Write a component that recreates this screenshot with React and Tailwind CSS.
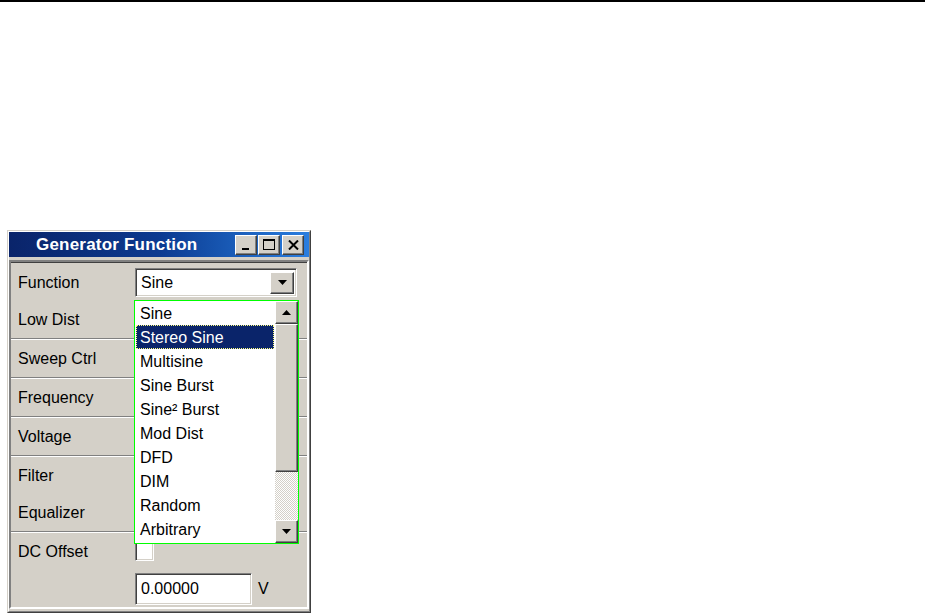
const raised =
  "border border-t-white border-l-white border-r-[#404040] border-b-[#404040] shadow-[inset_-1px_-1px_#808080]";
const sunken =
  "border border-t-[#808080] border-l-[#808080] border-r-white border-b-white shadow-[inset_1px_1px_#404040,inset_-1px_-1px_#d4d0c8]";

const options = [
  "Sine",
  "Stereo Sine",
  "Multisine",
  "Sine Burst",
  "Sine² Burst",
  "Mod Dist",
  "DFD",
  "DIM",
  "Random",
  "Arbitrary",
];

function Arrow({ up }) {
  return (
    <svg width="9" height="5" viewBox="0 0 9 5">
      <path d={up ? "M4.5 0L9 5H0z" : "M0 0h9L4.5 5z"} fill="#000" />
    </svg>
  );
}

function TitleButton({ children }) {
  return (
    <div className={`flex h-[20px] w-[22px] items-center justify-center bg-[#d4d0c8] ${raised}`}>
      {children}
    </div>
  );
}

function Row({ label, children }) {
  return (
    <div className="flex h-[37px] items-center">
      <div className="w-[124px] pl-[7px] pt-px">{label}</div>
      {children}
    </div>
  );
}

function Separator() {
  return (
    <div>
      <div className="h-px bg-[#808080]" />
      <div className="h-px bg-white" />
    </div>
  );
}

export default function App() {
  return (
    <div
      className="h-[616px] w-[925px] overflow-hidden bg-white text-[16px] text-black"
      style={{ fontFamily: '"Liberation Sans", Arial, sans-serif' }}
    >
      <div className="h-[2px] bg-black" />

      <div className="ml-[7px] mt-[228px] w-[304px] border border-t-[#d4d0c8] border-l-[#d4d0c8] border-r-[#404040] border-b-[#404040]">
        <div className="border border-t-white border-l-white border-r-[#808080] border-b-[#808080] bg-[#d4d0c8] pb-[2px]">
          {/* title bar */}
          <div className="flex h-[25px] items-center bg-gradient-to-r from-[#0a246a] via-[#0c3a90] to-[#2a7ee0] pl-[27px] pr-[5px]">
            <div className="flex-1 text-[17px] font-bold tracking-[0.2px] text-white">Generator Function</div>
            <div className="flex items-center">
              <TitleButton>
                <div className="ml-[-2px] mt-[9px] h-[2px] w-[7px] bg-black" />
              </TitleButton>
              <div className="ml-px">
                <TitleButton>
                  <div className="h-[11px] w-[12px] border border-t-2 border-black" />
                </TitleButton>
              </div>
              <div className="ml-[2px]">
                <TitleButton>
                  <svg width="11" height="10" viewBox="0 0 11 10">
                    <path d="M1 0.5L10 9.5M10 0.5L1 9.5" stroke="#000" strokeWidth="2" />
                  </svg>
                </TitleButton>
              </div>
            </div>
          </div>

          {/* panel */}
          <div className="mt-[3px] border-2 border-t-[#808080] border-l-[#808080] border-r-white border-b-white">
            <div className="relative border-t border-t-[#404040]">
              <div className="pt-px">
                <Row label="Function">
                  <div className={`flex h-[29px] w-[162px] items-center bg-white ${sunken}`}>
                    <div className="flex-1 pl-[5px] pt-px">Sine</div>
                    <div className={`mr-[2px] flex h-[22px] w-[24px] items-center justify-center bg-[#d4d0c8] ${raised}`}>
                      <Arrow />
                    </div>
                  </div>
                </Row>
                <Row label="Low Dist" />
              </div>
              <Separator />
              <Row label="Sweep Ctrl" />
              <Separator />
              <Row label="Frequency" />
              <Separator />
              <Row label="Voltage" />
              <Separator />
              <Row label="Filter" />
              <Row label="Equalizer" />
              <Separator />
              <Row label="DC Offset">
                <div className={`h-[19px] w-[19px] bg-white ${sunken}`} />
              </Row>
              <Row label="">
                <div className={`flex h-[32px] w-[117px] items-center bg-white pl-[5px] pt-px ${sunken}`}>0.00000</div>
                <div className="ml-[6px] pt-px">V</div>
              </Row>

              {/* open dropdown list */}
              <div className="absolute left-[123px] top-[37px] z-10 flex h-[244px] w-[165px] border border-[#00ff00] bg-white">
                <div className="flex-1">
                  {options.map((o, i) =>
                    i === 1 ? (
                      <div
                        key={o}
                        className="mx-px flex h-[24px] items-center bg-[#0a246a] pl-[4px] pt-px text-white outline-1 outline-dotted -outline-offset-1 outline-[#ffff80]"
                      >
                        {o}
                      </div>
                    ) : (
                      <div key={o} className="flex h-[24px] items-center pl-[5px] pt-px">
                        {o}
                      </div>
                    )
                  )}
                </div>
                <div className="flex w-[23px] flex-col">
                  <div className={`flex h-[23px] items-center justify-center bg-[#d4d0c8] ${raised}`}>
                    <Arrow up />
                  </div>
                  <div className={`h-[148px] bg-[#d4d0c8] ${raised}`} />
                  <div className="h-[48px] bg-[repeating-conic-gradient(#d4d0c8_0_25%,#ffffff_0_50%)] bg-[length:2px_2px]" />
                  <div className={`flex h-[23px] items-center justify-center bg-[#d4d0c8] ${raised}`}>
                    <Arrow />
                  </div>
                </div>
              </div>
            </div>
          </div>
        </div>
      </div>
    </div>
  );
}
